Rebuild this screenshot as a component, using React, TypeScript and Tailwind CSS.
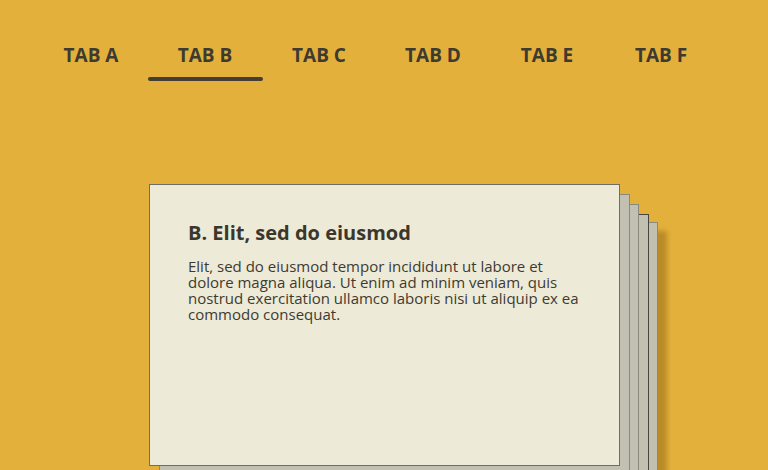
import React from "react";

const tabs = ["TAB A", "TAB B", "TAB C", "TAB D", "TAB E", "TAB F"];

export default function App() {
  return (
    <div
      className="w-[768px] h-[470px] overflow-hidden bg-[#e3b13b] text-[#3e3a2f]"
      style={{ fontFamily: '"Open Sans", "Noto Sans", sans-serif' }}
    >
      <div className="flex ml-[34px] pt-[41px]">
        {tabs.map((t, i) => (
          <div key={t} className="w-[114px] flex flex-col items-center">
            <div className="text-[19px] font-bold leading-[28px] h-[28px]">{t}</div>
            <div
              className={
                i === 1
                  ? "mt-[8px] w-[115px] h-[4px] rounded-full bg-[#433e30]"
                  : "mt-[8px] w-[115px] h-[4px]"
              }
            />
          </div>
        ))}
      </div>

      <div className="relative ml-[149px] mt-[103px] w-[471px] h-[282px]">
        <div className="absolute left-[38px] top-[38px] w-[471px] h-[282px] bg-[#c2c0b0] border border-[#8a897d] shadow-[9px_9px_5px_rgba(110,70,0,0.35)]" />
        <div className="absolute left-[29px] top-[30px] w-[471px] h-[282px] bg-[#c2c0b0] border border-[#46453f]" />
        <div className="absolute left-[19px] top-[20px] w-[471px] h-[282px] bg-[#c2c0b0] border border-[#8a897d]" />
        <div className="absolute left-[10px] top-[10px] w-[471px] h-[282px] bg-[#c2c0b0] border border-[#8a897d]" />
        <div className="relative w-[471px] h-[282px] bg-[#edead8] border border-[#6f6e64] pl-[38px] pr-[36px] pt-[35px]">
          <h2 className="text-[20px] font-bold leading-[26px] text-[#3b372d]">
            B. Elit, sed do eiusmod
          </h2>
          <p className="mt-[12px] text-[15px] leading-[16px] text-[#3e3a30]">
            Elit, sed do eiusmod tempor incididunt ut labore et dolore magna aliqua. Ut enim ad minim veniam, quis nostrud exercitation ullamco laboris nisi ut aliquip ex ea commodo consequat.
          </p>
        </div>
      </div>
    </div>
  );
}
